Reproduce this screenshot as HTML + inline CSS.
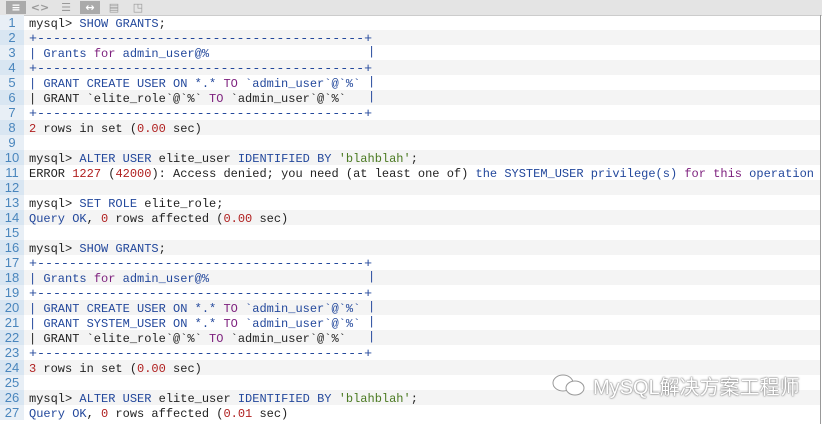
<!DOCTYPE html>
<html><head><meta charset="utf-8"><style>
body{margin:0;width:822px;height:424px;overflow:hidden;background:#fff;font-family:"Liberation Mono",monospace;}
.tb{height:15px;background:#e4e4e4;border-bottom:1px solid #ccc;position:relative}
.tb span{position:absolute;top:1px;height:13px;width:20px;color:#fff;font:bold 11px "DejaVu Sans",sans-serif;text-align:center;line-height:13px}
.code{position:absolute;top:15px;left:0;width:820px;border-right:1px solid #999;height:409px}
.l{height:15px;line-height:15px;font-size:12px;white-space:pre;color:#222;position:relative}
.l.t{font-size:13.3px}
.l:nth-child(even){background:#f4f4f4}
.l:nth-child(even) .n{background:#d9e6f2}
.n{display:inline-block;width:24px;background:#e8eff6;color:#4a86bd;text-align:center;font-family:"Liberation Sans",sans-serif;font-size:13px;margin-right:5px}
.k{color:#23489c}.p{color:#7d1f7d}.d{color:#b02020}.s{color:#4b7a22}
.e{position:absolute;left:368px;top:0;color:#23489c}
.wm{position:absolute;left:593px;top:371px;font:20px "Liberation Sans","Noto Sans CJK SC",sans-serif;color:#fff;text-shadow:0 0 2px #777,0 0 1px #555}
</style></head><body>
<div class="tb">
<span style="left:6px;background:#aaa">≡</span><span style="left:30px;color:#999">&lt;&gt;</span><span style="left:56px;color:#999">☰</span><span style="left:80px;background:#aaa">↔</span><span style="left:104px;color:#999">▤</span><span style="left:128px;color:#999">◳</span>
</div>
<div class="code">
<div class="l"><span class="n">1</span>mysql&gt; <span class="k">SHOW GRANTS</span>;</div>
<div class="l t"><span class="n">2</span><span class="k">+-----------------------------------------+</span></div>
<div class="l"><span class="n">3</span><span class="k">| Grants </span><span class="p">for</span><span class="k"> admin_user@%</span><span class="e">|</span></div>
<div class="l t"><span class="n">4</span><span class="k">+-----------------------------------------+</span></div>
<div class="l"><span class="n">5</span><span class="k">| GRANT CREATE USER ON *.* </span><span class="p">TO</span><span class="k"> `admin_user`@`%`</span><span class="e">|</span></div>
<div class="l"><span class="n">6</span>| GRANT `elite_role`@`%` <span class="p">TO</span> `admin_user`@`%`<span class="e">|</span></div>
<div class="l t"><span class="n">7</span><span class="k">+-----------------------------------------+</span></div>
<div class="l"><span class="n">8</span><span class="d">2</span> rows in set (<span class="d">0.00</span> sec)</div>
<div class="l"><span class="n">9</span></div>
<div class="l"><span class="n">10</span>mysql&gt; <span class="k">ALTER USER</span> elite_user <span class="k">IDENTIFIED BY</span> <span class="s">'blahblah'</span>;</div>
<div class="l"><span class="n">11</span>ERROR <span class="d">1227</span> (<span class="d">42000</span>): Access denied; you need (at least one of) <span class="k">the SYSTEM_USER privilege(s)</span> <span class="p">for this</span> <span class="k">operation</span></div>
<div class="l"><span class="n">12</span></div>
<div class="l"><span class="n">13</span>mysql&gt; <span class="k">SET ROLE</span> elite_role;</div>
<div class="l"><span class="n">14</span><span class="k">Query OK</span>, <span class="d">0</span> rows affected (<span class="d">0.00</span> sec)</div>
<div class="l"><span class="n">15</span></div>
<div class="l"><span class="n">16</span>mysql&gt; <span class="k">SHOW GRANTS</span>;</div>
<div class="l t"><span class="n">17</span><span class="k">+-----------------------------------------+</span></div>
<div class="l"><span class="n">18</span><span class="k">| Grants </span><span class="p">for</span><span class="k"> admin_user@%</span><span class="e">|</span></div>
<div class="l t"><span class="n">19</span><span class="k">+-----------------------------------------+</span></div>
<div class="l"><span class="n">20</span><span class="k">| GRANT CREATE USER ON *.* </span><span class="p">TO</span><span class="k"> `admin_user`@`%`</span><span class="e">|</span></div>
<div class="l"><span class="n">21</span><span class="k">| GRANT SYSTEM_USER ON *.* </span><span class="p">TO</span><span class="k"> `admin_user`@`%`</span><span class="e">|</span></div>
<div class="l"><span class="n">22</span>| GRANT `elite_role`@`%` <span class="p">TO</span> `admin_user`@`%`<span class="e">|</span></div>
<div class="l t"><span class="n">23</span><span class="k">+-----------------------------------------+</span></div>
<div class="l"><span class="n">24</span><span class="d">3</span> rows in set (<span class="d">0.00</span> sec)</div>
<div class="l"><span class="n">25</span></div>
<div class="l"><span class="n">26</span>mysql&gt; <span class="k">ALTER USER</span> elite_user <span class="k">IDENTIFIED BY</span> <span class="s">'blahblah'</span>;</div>
<div class="l"><span class="n">27</span><span class="k">Query OK</span>, <span class="d">0</span> rows affected (<span class="d">0.01</span> sec)</div>
</div>
<svg style="position:absolute;left:550px;top:373px" width="40" height="26"><g fill="#fff" stroke="#999" stroke-width="1"><ellipse cx="13" cy="10" rx="10" ry="8"/><ellipse cx="25" cy="15" rx="9" ry="7"/></g></svg>
<div class="wm">MySQL解决方案工程师</div>
</body></html>
